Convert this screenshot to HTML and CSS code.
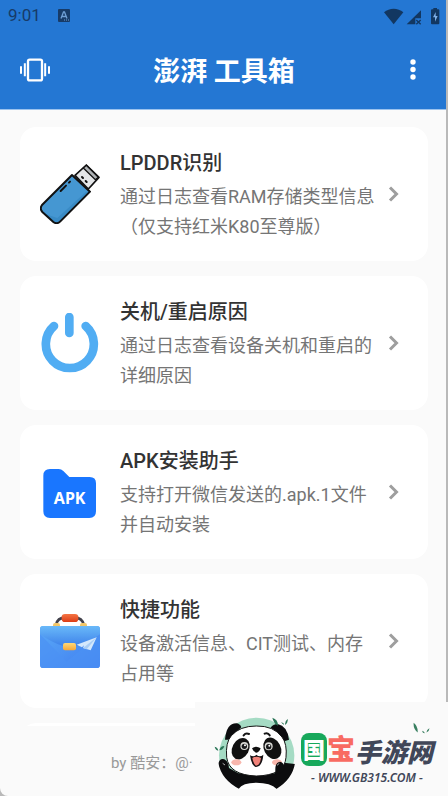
FILE: index.html
```
<!DOCTYPE html>
<html lang="zh-CN">
  <head>
    <meta charset="UTF-8" />
    <meta name="viewport" content="width=device-width, initial-scale=1" />
    <title>澎湃 工具箱</title>
    <link rel="stylesheet" href="styles.css">
  </head>
  <body>
    <div class="app">
      <header class="app-bar">
        <div class="status-bar">
          <span class="time">9:01</span>
          <svg class="status-badge" viewBox="0 0 12 13">
            <rect width="12" height="13" rx="1" fill="#173b68" />
            <path d="M3 9.500L5.500 3h1L9 9.500M4 7.500h4" fill="none" stroke="#6f9fd5" stroke-width="1.300" />
            <path d="M6 11h5" stroke="#6f9fd5" stroke-dasharray="1 1" />
          </svg>
          <div class="status-icons">
            <svg width="56" height="18" viewBox="480 15 168 54">
              <path d="M480 31C496 17 522 17 538 31L509 67Z" fill="#123761" />
              <path d="M591 25V49H574V67H548Z" fill="#123761" />
              <path d="M577 54L590 67M590 54L577 67" stroke="#123761" stroke-width="4" />
              <path d="M628 18h11v4h4q3 0 3 3v39q0 3-3 3h-19q-3 0-3-3V25q0-3 3-3h4z" fill="#123761" />
              <path d="M635 30L627 46h6v13l8-17h-6z" fill="#7fb0e6" />
            </svg>
          </div>
        </div>
        <div class="toolbar">
          <button class="icon-btn" type="button" aria-label="振动">
            <svg width="30" height="24" viewBox="60 173 90 72">
              <rect x="84" y="178" width="42" height="62" rx="5" fill="none" stroke="#fff" stroke-width="7" />
              <path d="M74.500 189v39M135.500 189v39M63 198v22M147 198v22" stroke="#fff" stroke-width="6" />
            </svg>
          </button>
          <h1>澎湃 工具箱</h1>
          <button class="icon-btn" type="button" aria-label="更多">
            <svg width="30" height="24" viewBox="0 0 30 24">
              <g fill="#fff">
                <circle cx="15" cy="4" r="2.700" />
                <circle cx="15" cy="11.500" r="2.700" />
                <circle cx="15" cy="19" r="2.700" />
              </g>
            </svg>
          </button>
        </div>
      </header>

      <main class="card-list">
        <a class="card" href="#lpddr">
          <svg class="card-icon" viewBox="120 129 180 180">
            <path d="M225 163L259 132L297 169L265 204Z" fill="#e4e6e8" stroke="#111" stroke-width="5" stroke-linejoin="round" />
            <path d="M259 133L295 169L286 176L250 141Z" fill="#aeb2b5" stroke="#111" stroke-width="4" />
            <path d="M216 162L270 212L181 301Q171 311 160 303L127 273Q118 263 126 252Z" fill="#4597d2" />
            <path d="M258 212L172 291Q155 286 137 278L160 303Q171 311 181 301L270 212Z" fill="#398bc6" />
            <path d="M216 162L270 212L181 301Q171 311 160 303L127 273Q118 263 126 252Z" fill="none" stroke="#111" stroke-width="6" stroke-linejoin="round" />
            <path d="M182 210L198 194M207 185L210 182M246 168L249 171M257 180L260 183" stroke="#111" stroke-width="6" stroke-linecap="round" />
          </svg>
          <div class="card-text">
            <h2>LPDDR识别</h2>
            <p>通过日志查看RAM存储类型信息（仅支持红米K80至尊版）</p>
          </div>
          <svg class="chevron" viewBox="0 0 22 22"><path d="M8 4.500L14.500 11L8 17.500" /></svg>
        </a>

        <a class="card" href="#power">
          <svg class="card-icon" viewBox="120 129 180 180">
            <path d="M208 141V189M162 168A72 72 0 1 0 257 168" fill="none" stroke="#51adf3" stroke-width="26" stroke-linecap="round" />
          </svg>
          <div class="card-text">
            <h2>关机/重启原因</h2>
            <p>通过日志查看设备关机和重启的详细原因</p>
          </div>
          <svg class="chevron" viewBox="0 0 22 22"><path d="M8 4.500L14.500 11L8 17.500" /></svg>
        </a>

        <a class="card" href="#apk">
          <svg class="card-icon" viewBox="120 126 180 180">
            <path d="M130 167Q130 147 150 147H176Q184 147 190 153L208 171H269Q288 171 288 190V274Q288 294 268 294H150Q130 294 130 274Z" fill="#1976ff" />
            <text class="apk-label" x="209" y="252" text-anchor="middle">APK</text>
          </svg>
          <div class="card-text">
            <h2>APK安装助手</h2>
            <p>支持打开微信发送的.apk.1文件并自动安装</p>
          </div>
          <svg class="chevron" viewBox="0 0 22 22"><path d="M8 4.500L14.500 11L8 17.500" /></svg>
        </a>

        <a class="card" href="#quick">
          <svg class="card-icon" viewBox="120 138 180 180">
            <defs>
              <linearGradient id="bag" x1="0" y1="0" x2="1" y2="1">
                <stop offset="0" stop-color="#5aaaf7" />
                <stop offset="1" stop-color="#3f7cf0" />
              </linearGradient>
              <linearGradient id="flap" x1="0" y1="0" x2="0" y2="1">
                <stop offset="0" stop-color="#69b9f9" />
                <stop offset="1" stop-color="#3f83ea" />
              </linearGradient>
              <linearGradient id="grip" x1="0" y1="0" x2="0" y2="1">
                <stop offset="0" stop-color="#f47443" />
                <stop offset="1" stop-color="#dc3d17" />
              </linearGradient>
              <linearGradient id="lock" x1="0" y1="0" x2="0" y2="1">
                <stop offset="0" stop-color="#ffd978" />
                <stop offset="1" stop-color="#f5a638" />
              </linearGradient>
            </defs>
            <path d="M168 180Q172 158 196 158H224Q246 158 252 180" fill="none" stroke="#41404a" stroke-width="8" />
            <rect x="185" y="147" width="50" height="24" rx="10" fill="url(#grip)" />
            <path d="M159 186v-6q0-6 6-6h9q6 0 6 6v6zM240 186v-6q0-6 6-6h9q6 0 6 6v6z" fill="#f3c667" />
            <rect x="120" y="183" width="180" height="126" rx="10" fill="url(#bag)" />
            <path d="M120 207L200 290Q235 260 300 207V299Q300 309 290 309H130Q120 309 120 299Z" fill="#4b91f4" opacity=".7" />
            <path d="M130 183H290Q300 183 300 193V208Q262 235 232 242H187Q154 232 120 207V193Q120 183 130 183Z" fill="url(#flap)" />
            <path d="M290 217L230 239L246 247L252 241L249 249L272 256Z" fill="#d4e8fc" />
            <path d="M290 217L249 249L260 253Z" fill="#a9cdf5" />
            <rect x="189" y="234" width="39" height="22" rx="6" fill="url(#lock)" />
          </svg>
          <div class="card-text">
            <h2>快捷功能</h2>
            <p>设备激活信息、CIT测试、内存占用等</p>
          </div>
          <svg class="chevron" viewBox="0 0 22 22"><path d="M8 4.500L14.500 11L8 17.500" /></svg>
        </a>

        <div class="card card-next"></div>
      </main>

      <footer class="credit">by 酷安：@·</footer>
    </div>

    <div class="watermark">
      <svg class="panda" viewBox="0 6 300 282">
        <defs>
          <clipPath id="badge"><path d="M0 0H300V190H270Q262 238 214 267H103Q50 240 40 190H0Z" /></clipPath>
        </defs>
        <circle cx="155" cy="166" r="113" fill="#a5dbc4" clip-path="url(#badge)" />
        <g clip-path="url(#badge)">
          <path d="M40 194Q42 174 58 178Q70 183 72 204L100 220H210L214 196Q222 182 236 188L270 192V280H40Z" fill="#0c0c0e" />
          <path d="M100 268Q112 248 154 248Q200 248 218 270V280H100Z" fill="#fff" />
        </g>
        <path d="M60 119Q64 70 94 70Q105 71 109 82L70 119Z" fill="#0c0c0e" />
        <path d="M197 83Q204 72 218 72Q247 78 252 119L238 124Z" fill="#0c0c0e" />
        <path d="M154 78Q206 77 231 111Q247 132 243 172Q239 226 154 228Q72 225 65 172Q61 128 79 107Q104 78 154 78Z" fill="#fff" stroke="#151515" stroke-width="3" />
        <path d="M116 106Q122 98 132 102M179 101Q189 97 194 106" fill="none" stroke="#151515" stroke-width="6" stroke-linecap="round" />
        <ellipse cx="107" cy="146" rx="25" ry="34" fill="#111" transform="rotate(28 107 146)" />
        <ellipse cx="202" cy="145" rx="25" ry="34" fill="#111" transform="rotate(-28 202 145)" />
        <circle cx="118" cy="138" r="12" fill="#d9d9d5" />
        <circle cx="118" cy="139" r="8" fill="#17181a" />
        <circle cx="120" cy="136" r="3" fill="#fff" />
        <circle cx="191" cy="139" r="12" fill="#d9d9d5" />
        <circle cx="191" cy="140" r="8" fill="#17181a" />
        <circle cx="193" cy="137" r="3" fill="#fff" />
        <path d="M141 145Q153 135 167 145Q163 157 154 158Q145 156 141 145Z" fill="#111" />
        <path d="M135 166Q147 173 154 164Q164 174 175 164Q172 200 153 201Q139 197 135 166Z" fill="#171214" />
        <path d="M142 174Q153 167 168 174Q165 196 153 197Q145 192 142 174Z" fill="#f08178" />
        <ellipse cx="94" cy="187" rx="15" ry="9" fill="#f8b7ad" />
        <ellipse cx="216" cy="187" rx="15" ry="9" fill="#f8b7ad" />
        <path d="M211 208Q211 187 225 185Q239 188 237 207Q233 222 211 223Z" fill="#0c0c0e" />
        <path d="M53 190L60 195M216 196L223 190" stroke="#fff" stroke-width="2" />
        <path d="M202 53Q219 58 219 77Q206 70 202 53ZM43 151Q46 138 58 138Q55 150 43 151ZM29 140Q38 142 40 152Q31 150 29 140ZM240 75Q239 63 248 57Q250 68 240 75Z" fill="#2c7658" />
        <path d="M230 68L237 73" stroke="#2c7658" stroke-width="3" />
      </svg>
      <div class="brand">
        <svg class="leaves" viewBox="0 0 45 33">
          <path d="M1 2Q13 11 12 29Q-1 18 1 2ZM24 24Q29 24 32 31Q25 31 24 24ZM36 29Q37 21 44 17Q45 25 36 29Z" fill="#397f60" />
        </svg>
        <div class="brand-name"><span class="green">国</span><span class="red">宝</span><span class="dark">手游网</span></div>
        <div class="brand-url">- WWW.GB315.COM -</div>
      </div>
    </div>
  </body>
</html>
```
FILE: styles.css
```
* {
  box-sizing: border-box;
}

body {
  margin: 0;
  background: #b9b9b9;
  font-family: Roboto, "Noto Sans CJK SC", sans-serif;
  position: relative;
  overflow: hidden;
}

h1,
h2,
p {
  margin: 0;
}

.app {
  display: flex;
  flex-direction: column;
  height: 100vh;
  margin-right: 2px;
  background: #fafafa;
  border-bottom-left-radius: 8px;
  overflow: hidden;
}

/* Header */
.app-bar {
  flex: none;
  background: #2477d3;
  color: #fff;
  border-bottom: 1px solid #9cc3ee;
}

.status-bar {
  display: flex;
  align-items: center;
  height: 31px;
  padding: 0 6px 0 8px;
  color: #173b68;
}

.time {
  font-size: 17px;
  line-height: 31px;
}

.status-badge {
  width: 12px;
  height: 13px;
  margin-left: 17px;
}

.status-icons {
  display: flex;
  margin-left: auto;
}

.toolbar {
  display: flex;
  align-items: center;
  justify-content: space-between;
  height: 78px;
  padding: 0 18px 0 20px;
}

.toolbar h1 {
  padding-top: 4px;
  font-size: 27px;
  font-weight: 700;
  line-height: 40px;
}

.icon-btn {
  display: flex;
  padding: 0;
  border: none;
  background: none;
  cursor: pointer;
}

/* Cards */
.card-list {
  flex: 1;
  min-height: 0;
  display: flex;
  flex-direction: column;
  gap: 15px;
  padding: 17px 18px 0 20px;
  overflow: hidden;
}

.card {
  flex: none;
  display: flex;
  align-items: center;
  padding: 19px 24px 19px 20px;
  border-radius: 16px;
  background: #fff;
  color: #333;
  text-decoration: none;
}

.card-next {
  height: 134px;
}

.card-icon {
  flex: none;
  width: 60px;
  height: 60px;
  margin-right: 20px;
}

.card-text {
  flex: 1;
  margin-right: 4px;
  padding-top: 2px;
}

.card-text h2 {
  margin-bottom: 4px;
  font-size: 20px;
  font-weight: 500;
  line-height: 30px;
}

.card-text p {
  font-size: 18px;
  line-height: 30px;
  color: #757575;
}

.chevron {
  flex: none;
  width: 22px;
  height: 22px;
  fill: none;
  stroke: #9e9e9e;
  stroke-width: 3;
}

.apk-label {
  font-family: "Noto Sans", sans-serif;
  font-size: 48px;
  font-weight: 700;
  fill: #fff;
}

/* Footer */
.credit {
  flex: none;
  height: 70px;
  padding-left: 111px;
  font-size: 15px;
  line-height: 74px;
  color: #999;
}

/* Site mark over the bottom right corner */
.watermark {
  position: absolute;
  right: 0;
  bottom: 0;
  display: flex;
  width: 253px;
  height: 94px;
  padding-left: 10px;
  background: #fafafa;
}

.panda {
  flex: none;
  width: 100px;
  height: 94px;
}

.brand {
  position: relative;
  flex: 1;
  padding-top: 27px;
  font-family: "Noto Sans", "Noto Sans CJK SC", sans-serif;
  font-weight: 900;
  font-style: italic;
  white-space: nowrap;
}

.leaves {
  position: absolute;
  top: 20px;
  right: 18px;
  width: 17px;
  height: 12px;
}

.brand-name {
  display: flex;
  align-items: center;
  height: 40px;
  font-size: 26px;
  line-height: 40px;
  color: #414759;
}

.green {
  width: 26px;
  height: 33px;
  margin-left: -4px;
  border-radius: 8px;
  background: #17a85b;
  color: #fff;
  font-size: 22px;
  font-style: normal;
  line-height: 32px;
  text-align: center;
}

.red {
  font-size: 28px;
  font-style: normal;
  color: #f86b62;
}

.dark {
  padding-top: 6px;
}

.brand-url {
  padding-left: 6px;
  font-size: 12px;
  font-weight: 600;
  line-height: 18px;
  color: #414759;
}
```
